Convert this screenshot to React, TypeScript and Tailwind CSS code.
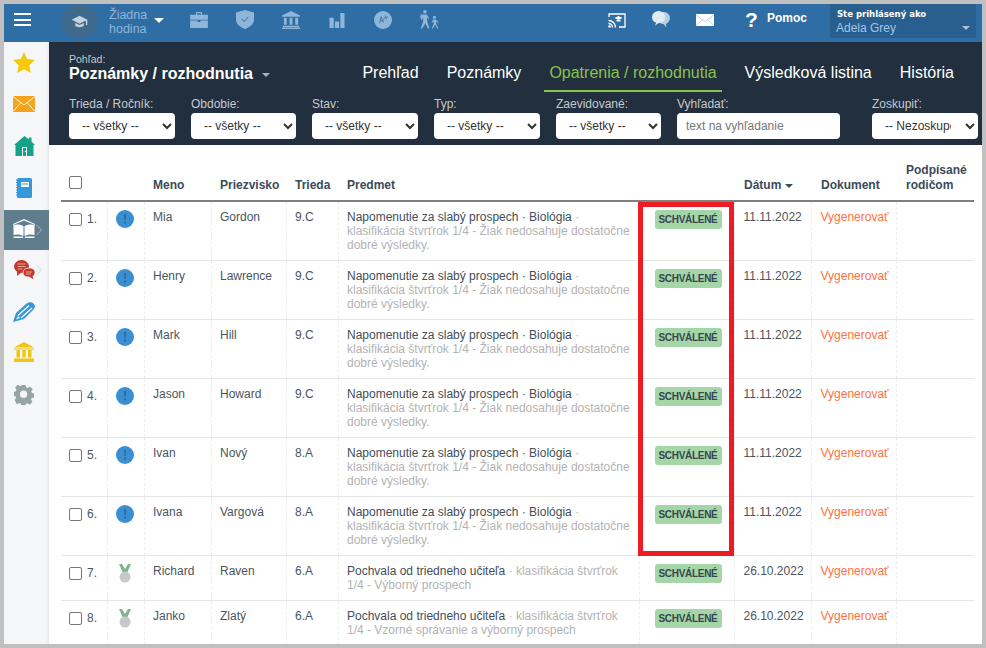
import React from "react";

const font = { fontFamily: '"Liberation Sans", Arial, sans-serif' };

const Cap = ({ c = "#fff", s = 20 }: { c?: string; s?: number }) => (
  <svg width={s} height={s} viewBox="0 0 24 24" fill={c}>
    <path d="M12 4 1 9.500 12 15l9-4.500V17h2V9.500z" />
    <path d="M6 14v4c2 2.600 10 2.600 12 0v-4l-6 3z" />
  </svg>
);

function TopIcon({ name }: { name: string }) {
  const c = "#8fb5d8";
  switch (name) {
    case "case":
      return (
        <svg width="18" height="16" viewBox="0 0 20 18" fill={c} className="mt-[3px]">
          <path d="M6.500 3V1.200C6.500.5 7 0 7.700 0h4.600c.7 0 1.200.5 1.200 1.200V3H20v5.600H0V3zm1.400 0h4.200V1.400H7.900z" />
          <path d="M0 9.600h8.500v1.600h3V9.600H20V18H0z" />
        </svg>
      );
    case "shield":
      return (
        <svg width="18" height="19" viewBox="0 0 19 20" fill={c} className="mt-[1px]">
          <path d="M9.500 0 19 2.500V10c0 4.500-4 8.200-9.500 10C4 18.200 0 14.500 0 10V2.500z" />
          <path d="m6 9.500 2.500 2.700L13 7.300" fill="none" stroke="#2e6da4" strokeWidth="1" />
        </svg>
      );
    case "bank":
      return (
        <svg width="18" height="18" viewBox="0 0 19 19" fill={c} className="mt-[2px]">
          <path d="M9.500 0 19 4.800V6H0V4.800z" />
          <path d="M2 7h3v7.500H2zM8 7h3v7.500H8zM14 7h3v7.500h-3zM1 15.500h17V17H1zM0 17.500h19V19H0z" />
        </svg>
      );
    case "bars":
      return (
        <svg width="16" height="16" viewBox="0 0 16 17" fill={c} className="mt-[3px]">
          <path d="M0 6h4.500v11H0zM5.800 10h4.400v7H5.800zM11.500 1H16v16h-4.500z" />
        </svg>
      );
    case "grade":
      return (
        <svg width="18" height="18" viewBox="0 0 19 19" className="mt-[2px]">
          <circle cx="9.500" cy="9.500" r="9.500" fill={c} />
          <path d="m6 13 1.500-7 2.500 6.500M6.500 10.500l4-1M10 8l4.500-2M12 5l1 4" fill="none" stroke="#2e6da4" strokeWidth=".8" />
        </svg>
      );
    default:
      return (
        <svg width="22" height="21" viewBox="0 0 22 21" fill={c}>
          <circle cx="6.500" cy="2" r="2" />
          <path d="M4.500 5h4l2.800 4-1 .8L9 8v4.500l2.500 8H9.800L7 14.500 3.500 20.500H1.800L4.500 13V8.500L3 11l-1.200-.7z" />
          <path d="M1.800 5 4 4.500 3.300 9 1.200 8.500z" />
          <circle cx="17" cy="8" r="1.700" />
          <path d="M15.500 10.500h3l3 3-.8.700-1.700-1.500v2.800l2.300 5h-1.400l-2.200-4.500-2.200 4.500h-1.400l2-5.300v-2.500l-1.500 1.500-.7-.7z" />
        </svg>
      );
  }
}

function TopBar() {
  return (
    <div className="h-[38px] shrink-0 flex items-start bg-[#2e6ea5]">
      <div className="w-[58px] pl-[10px] pt-[9px] shrink-0 flex flex-col gap-[3.500px]">
        <div className="w-[17px] h-[2px] bg-white" />
        <div className="w-[17px] h-[2px] bg-white" />
        <div className="w-[17px] h-[2px] bg-white" />
      </div>
      <div className="w-[35px] h-[35px] rounded-full bg-[#3f6a8d] flex items-center justify-center shrink-0">
        <Cap c="#c3d3e0" s={17} />
      </div>
      <div className="ml-[12px] mt-[4px] w-[38px] text-[12.500px] leading-[14px] text-[#8fb5d8]">Žiadna hodina</div>
      <div className="ml-[7px] mt-[14px] w-0 h-0 border-x-[5.500px] border-x-transparent border-t-[5.500px] border-t-white" />
      <div className="flex items-start ml-[25px] gap-[26px] mt-[5px]">
        {["case", "shield", "bank", "bars", "grade", "walk"].map((n) => (
          <div key={n} className="w-[20px] flex justify-center">
            <TopIcon name={n} />
          </div>
        ))}
      </div>
      <div className="flex-1" />
      <div className="flex items-start">
        <svg className="mt-[9px]" width="18" height="15" viewBox="0 0 18 15" fill="none" stroke="#fff">
          <path d="M1 4V1h16v13h-6" strokeWidth="1.300" />
          <path d="M.5 7.500a7 7 0 0 1 7 7M.5 10.500a4 4 0 0 1 4 4" strokeWidth="1.400" />
          <circle cx="1.500" cy="13.500" r="1.200" fill="#fff" stroke="none" />
          <path d="m10.500 3 4 2-4 2-4-2z M8.500 7v1.500h4V7" fill="#fff" stroke="none" />
        </svg>
        <svg className="ml-[26px] mt-[7px]" width="18" height="17" viewBox="0 0 19 18" fill="#e0ebf5">
          <ellipse cx="12.500" cy="7.500" rx="6.500" ry="6.500" fill="#b6cfe4" />
          <path d="M15 17.500 11 12h4z" fill="#b6cfe4" />
          <ellipse cx="7" cy="6.500" rx="7" ry="6.500" />
          <path d="M3 15.500 5 11H9z" />
        </svg>
        <svg className="ml-[26px] mt-[10px]" width="18" height="12" viewBox="0 0 18 12">
          <rect width="18" height="12" fill="#fff" />
          <path d="m0 1 9 6.500L18 1M0 11.500 6 6M18 11.500 12 6" fill="none" stroke="#a9c5df" strokeWidth=".8" />
        </svg>
        <span className="ml-[31px] mt-[6px] text-[21px] leading-[20px] font-bold text-white w-[14px]">?</span>
        <span className="ml-[8px] mt-[7px] text-[12px] leading-[14px] font-bold text-white">Pomoc</span>
      </div>
      <div className="ml-[23px] mr-[6px] w-[146px] h-[34px] bg-[#295f8e] rounded-b-[2px] relative pl-[6px] pt-[4px]">
        <div className="pl-[1px] text-[8.500px] leading-[12px] font-bold text-white" style={{ fontFamily: '"DejaVu Sans", sans-serif' }}>
          Ste prihlásený ako
        </div>
        <div className="text-[12px] leading-[16px] text-[#a3c4e6]">Adela Grey</div>
        <div className="absolute right-[6px] top-[22px] w-0 h-0 border-x-[4px] border-x-transparent border-t-[4px] border-t-[#a9bfd3]" />
      </div>
    </div>
  );
}

const sideIcons: Record<string, React.ReactNode> = {
  star: (
    <svg width="22" height="21" viewBox="0 0 22 21" fill="#f6c90e">
      <path d="m11 0 3.300 7 7.700 1-5.600 5.200L17.800 21 11 17.200 4.200 21l1.400-7.800L0 8l7.700-1z" />
    </svg>
  ),
  mail: (
    <svg width="22" height="16" viewBox="0 0 22 16">
      <rect width="22" height="16" fill="#f5a31a" />
      <path d="m0 .5 11 8.500L22 .5M0 15.500 8 6.500M22 15.500 14 6.500" fill="none" stroke="#fff" strokeWidth=".9" />
    </svg>
  ),
  home: (
    <svg width="21" height="20" viewBox="0 0 21 20">
      <path d="M10.500 0 15 3.500V1.500h2.500v4L21 9h-1.500v11H1.500V9H0z" fill="#16a085" />
      <path d="M8 11h5v9h-1V12H9v8H8z" fill="#fff" />
      <rect x="10.800" y="15" width="1" height="1" fill="#fff" />
    </svg>
  ),
  note: (
    <svg width="16" height="20" viewBox="0 0 16 20">
      <rect x="1" width="15" height="20" rx="1.500" fill="#3498db" />
      <rect x="5" y="4" width="8" height="5" fill="#fff" />
      <rect x="6" y="5.500" width="6" height="1" fill="#3498db" />
      <path d="M0 2h2M0 4.500h2M0 7h2M0 9.500h2M0 12h2M0 14.500h2M0 17h2" stroke="#3498db" strokeWidth="1" />
    </svg>
  ),
  book: (
    <svg width="22" height="20" viewBox="0 0 22 20" fill="#fff" className="-mt-[3px]">
      <path d="M11 0 22 5v1L11 1.500 0 6V5z" />
      <path d="M.5 6c3.500-1 7.500-.5 10 1v10c-2.500-1.500-6.500-2-10-1zM21.500 6c-3.500-1-7.500-.5-10 1v10c2.500-1.500 6.500-2 10-1z" />
      <path d="M.5 17.500h9.500v1.500H.5zM12 17.500h9.500v1.500H12z" />
    </svg>
  ),
  chat: (
    <svg width="21" height="20" viewBox="0 0 21 20" fill="#c0392b">
      <ellipse cx="7.500" cy="6.500" rx="7.500" ry="6.500" />
      <path d="M3 10v6l5-4z" />
      <path d="M9 13c0-3 2-5 6-5s6 2 6 4.500c0 2-1 3-2 3.500l1 4-5-3c-3 0-6-1-6-4z" stroke="#f4f6f8" strokeWidth=".8" />
      <path d="M3.500 4h8M3.500 6.500h8M3.500 9h5M12 12h6M12 14h5" stroke="#e6a69f" strokeWidth="1" />
    </svg>
  ),
  pen: (
    <svg width="22" height="20" viewBox="0 0 22 20" fill="#3498db">
      <path d="M0 20 3 11 13 2c2.500-2 5.500-2.500 8 0 1.500 2 1 4-1 6l-9 9z" />
      <path d="M5 13.500 16 3.500M8 16 19 6" stroke="#fff" strokeWidth="1.300" fill="none" />
      <path d="M3 17.500 5 14l2 2z" fill="#f4f6f8" />
    </svg>
  ),
  bank: (
    <svg width="20" height="20" viewBox="0 0 20 20" fill="#f1c40f">
      <path d="M10 0 20 5.500H0z" />
      <path d="M0 6.500h20v1H0zM2.500 8H6v7.500H2.500zM8.300 8h3.400v7.500H8.300zM14 8h3.500v7.500H14zM0 16.500h20V20H0z" />
    </svg>
  ),
  gear: (
    <svg width="20" height="20" viewBox="0 0 24 24" fill="#95a5a6">
      <path
        fillRule="evenodd"
        d="M9.500 0h5l.6 3.300 2 .9 2.800-1.900 3.500 3.500-1.900 2.800.9 2 3 .6v5l-3.300.6-.9 2 1.900 2.800-3.500 3.500-2.800-1.900-2 .9-.6 3h-5l-.6-3.300-2-.9-2.800 1.900L.8 19.300l1.900-2.800-.9-2L-1 14V9l3.300-.6.900-2L1.300 3.600 4.800.1l2.800 1.900 2-.9zM12 7.500a4.500 4.500 0 1 0 0 9 4.500 4.500 0 0 0 0-9z"
        transform="translate(0 -.5) scale(.96)"
      />
    </svg>
  ),
};

const Chevron = ({ c }: { c: string }) => (
  <svg className="absolute left-[32px] top-1/2 -translate-y-1/2" width="6" height="12" viewBox="0 0 6 12" fill="none" stroke={c} strokeWidth="1">
    <path d="m.5 1 5 5-5 5" />
  </svg>
);

function Sidebar() {
  const items: [string, string, boolean][] = [
    ["star", "h-[40px]", false],
    ["mail", "h-[44px]", false],
    ["home", "h-[40px]", false],
    ["note", "h-[44px]", false],
    ["book", "h-[40px]", true],
    ["chat", "h-[40px]", false],
    ["pen", "h-[44px]", false],
    ["bank", "h-[36px]", false],
    ["gear", "h-[50px]", false],
  ];
  return (
    <div className="w-[45px] shrink-0 bg-[#f4f6f8] flex flex-col shadow-[inset_-3px_0_3px_-2px_#e2e4e7]">
      {items.map(([n, h, active]) => (
        <div key={n} className={`${h} relative flex items-center justify-center pr-[5px] ${active ? "bg-[#5f7d8d]" : ""}`}>
          {sideIcons[n]}
          {n === "book" && <Chevron c="#a9b8c0" />}
          {n === "chat" && <Chevron c="#d5d9dc" />}
        </div>
      ))}
    </div>
  );
}

const filters = [
  ["Trieda / Ročník:", "w-[106px]"],
  ["Obdobie:", "w-[105px]"],
  ["Stav:", "w-[106px]"],
  ["Typ:", "w-[106px]"],
  ["Zaevidované:", "w-[105px]"],
] as const;

function Header() {
  const tabs = ["Prehľad", "Poznámky", "Opatrenia / rozhodnutia", "Výsledková listina", "História"];
  return (
    <div className="h-[103px] shrink-0 bg-[#222f3e] pl-[20px] pr-[4px] flex flex-col">
      <div className="h-[50px] flex items-start shrink-0">
        <div className="pt-[12px]">
          <div className="text-[10.500px] leading-[11px] text-[#c5c9ce]">Pohľad:</div>
          <div className="flex items-center text-[16px] leading-[18px] font-bold text-white">
            Poznámky / rozhodnutia
            <span className="ml-[9px] mt-[1px] w-0 h-0 border-x-[4px] border-x-transparent border-t-[4px] border-t-[#aab1b9]" />
          </div>
        </div>
        <div className="flex-1" />
        <div className="flex mr-[19px] gap-[18px] h-[50px]">
          {tabs.map((t, i) => (
            <div
              key={t}
              className={`h-[50px] px-[5px] text-[16px] leading-[18px] pt-[22px] ${
                i === 2 ? "text-[#8bc34a] border-b-[2px] border-[#8bc34a]" : "text-white"
              }`}
            >
              {t}
            </div>
          ))}
        </div>
      </div>
      <div className="flex items-end mt-[5px]">
        {filters.map(([l, w]) => (
          <div key={l} className={`mr-[16px] ${w}`}>
            <div className="text-[12px] leading-[14px] mb-[2px] text-[#c5c9ce]">{l}</div>
            <select className="w-full h-[26px] bg-white rounded-[4px] pl-[9px] text-[12px] text-[#333] outline-none">
              <option>-- všetky --</option>
            </select>
          </div>
        ))}
        <div className="w-[163px] mr-[32px]">
          <div className="text-[12px] leading-[14px] mb-[2px] text-[#c5c9ce]">Vyhľadať:</div>
          <input
            placeholder="text na vyhľadanie"
            className="w-full h-[26px] bg-white rounded-[4px] px-[9px] text-[12px] text-[#333] placeholder:text-[#777] outline-none"
          />
        </div>
        <div className="w-[106px] shrink-0">
          <div className="text-[12px] leading-[14px] mb-[2px] text-[#c5c9ce]">Zoskupiť:</div>
          <select className="w-full h-[26px] bg-white rounded-[4px] pl-[9px] pr-[11px] text-[12px] text-[#333] outline-none">
            <option>-- Nezoskupovať --</option>
          </select>
        </div>
      </div>
    </div>
  );
}

const warn = "Napomenutie za slabý prospech · Biológia";
const warnSub = "· klasifikácia štvrťrok 1/4 - Žiak nedosahuje dostatočne dobré výsledky.";
const rows = [
  ["Mia", "Gordon", "9.C", warn, warnSub, "11.11.2022", "w"],
  ["Henry", "Lawrence", "9.C", warn, warnSub, "11.11.2022", "w"],
  ["Mark", "Hill", "9.C", warn, warnSub, "11.11.2022", "w"],
  ["Jason", "Howard", "9.C", warn, warnSub, "11.11.2022", "w"],
  ["Ivan", "Nový", "8.A", warn, warnSub, "11.11.2022", "w"],
  ["Ivana", "Vargová", "8.A", warn, warnSub, "11.11.2022", "w"],
  ["Richard", "Raven", "6.A", "Pochvala od triedneho učiteľa", "· klasifikácia štvrťrok 1/4 - Výborný prospech", "26.10.2022", "m"],
  ["Janko", "Zlatý", "6.A", "Pochvala od triedneho učiteľa", "· klasifikácia štvrťrok 1/4 - Vzorné správanie a výborný prospech", "26.10.2022", "m"],
];

const WarnIcon = () => (
  <svg width="18" height="18" viewBox="0 0 18 18">
    <circle cx="9" cy="9" r="9" fill="#3a8fd3" />
    <path d="M8 4h2l-.3 6H8.300zM8 11.500h2V13.500H8z" fill="#2e6a9e" />
  </svg>
);

const Medal = () => (
  <svg width="12" height="19" viewBox="0 0 12 19">
    <path d="M0 0h3l3 5 3-5h3L8 9H4z" fill="#7fb58c" />
    <circle cx="6" cy="13" r="5.500" fill="#c6c8c9" />
  </svg>
);

const Box = () => <span className="inline-block w-[13px] h-[13px] rounded-[2px] border border-[#767676] bg-white shrink-0" />;

const th = "px-[9px] pb-[7px] align-bottom text-left font-bold text-[12px] leading-[15px] text-[#3b4a5a]";
const thR = "pl-[10px] pr-[4px] pb-[7px] align-bottom text-left font-bold text-[12px] leading-[15px] text-[#3b4a5a]";
const td = "pl-[8.500px] pr-[4px] py-[8px] align-top border-l border-dashed border-[#eeeeee]";
const tdR = "pl-[9px] pr-[4px] py-[8px] align-top border-l border-dashed border-[#eeeeee]";

function DataTable() {
  return (
    <div className="flex-1 bg-white pl-[12px] pt-[16px] relative overflow-hidden">
      <table className="border-collapse table-fixed w-[913px] text-[12px] leading-[14px] text-[#4a5560]">
        <colgroup>
          <col className="w-[46px]" />
          <col className="w-[37px]" />
          <col className="w-[67px]" />
          <col className="w-[75px]" />
          <col className="w-[52px]" />
          <col className="w-[301px]" />
          <col className="w-[95px]" />
          <col className="w-[77px]" />
          <col className="w-[85px]" />
          <col className="w-[78px]" />
        </colgroup>
        <thead>
          <tr className="border-b-[2px] border-[#808080] h-[40px]">
            <th className="px-[8px] pb-[8px] align-bottom text-left">
              <Box />
            </th>
            <th />
            <th className={th}>Meno</th>
            <th className={th}>Priezvisko</th>
            <th className={th}>Trieda</th>
            <th className={th}>Predmet</th>
            <th />
            <th className={thR}>
              <span className="inline-flex items-center">
                Dátum
                <span className="ml-[4px] w-0 h-0 border-x-[4px] border-x-transparent border-t-[4px] border-t-[#3b4a5a]" />
              </span>
            </th>
            <th className={thR}>Dokument</th>
            <th className={thR}>Podpísané rodičom</th>
          </tr>
        </thead>
        <tbody>
          {rows.map((r, i) => (
            <tr key={i} className="border-b border-[#e5e5e5]">
              <td className="pl-[8px] pt-[11px] align-top">
                <span className="flex items-center gap-[5px] text-[12px] leading-[13px]">
                  <Box />
                  {i + 1}.
                </span>
              </td>
              <td className={`${td} pr-0`}>
                {r[6] === "w" ? (
                  <WarnIcon />
                ) : (
                  <div className="pl-[3px]">
                    <Medal />
                  </div>
                )}
              </td>
              <td className={td}>{r[0]}</td>
              <td className={td}>{r[1]}</td>
              <td className={td}>{r[2]}</td>
              <td className={`${td} pr-[6px]`}>
                <span className="text-[#444e58]">{r[3]}</span> <span className="text-[#b3b3b3]">{r[4]}</span>
              </td>
              <td className={`${td} pl-[15px] pr-0`}>
                <span className="inline-block w-[67px] h-[19px] rounded-[3px] bg-[#a5d6a7] text-center text-[10px] leading-[19px] font-bold tracking-[-0.3px] text-[#37474f]">
                  SCHVÁLENÉ
                </span>
              </td>
              <td className={tdR}>{r[5]}</td>
              <td className={`${tdR} text-[#ff7043]`}>Vygenerovať</td>
              <td className={tdR} />
            </tr>
          ))}
        </tbody>
      </table>
      <div className="absolute left-[589px] top-[57px] w-[96px] h-[354px] border-[5px] border-[#ed1c24]" />
    </div>
  );
}

export default function App() {
  return (
    <div className="w-[986px] h-[648px] bg-[#c0c0c0] p-[4px] overflow-hidden" style={font}>
      <div className="w-[978px] h-[640px] flex flex-col bg-white overflow-hidden">
        <TopBar />
        <div className="flex flex-1 min-h-0">
          <Sidebar />
          <div className="flex-1 flex flex-col min-w-0">
            <Header />
            <DataTable />
          </div>
        </div>
      </div>
    </div>
  );
}
